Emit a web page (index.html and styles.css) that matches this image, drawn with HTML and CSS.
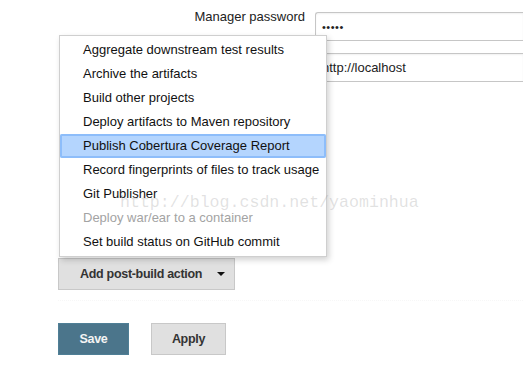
FILE: index.html
```html
<!DOCTYPE html>
<html lang="en">
<head>
    <meta charset="UTF-8">
    <title>Post-build Actions</title>
    <link rel="stylesheet" href="styles.css">
</head>
<body>
    <div class="page">
        <div class="row">
            <label class="rowLabel">Manager password</label>
            <div class="field"><span class="dots">•••••</span></div>
        </div>
        <div class="row row2">
            <span class="rowLabel"></span>
            <div class="field">http://localhost</div>
        </div>

        <div class="actionWrap">
            <ul class="menu">
                <li>Aggregate downstream test results</li>
                <li>Archive the artifacts</li>
                <li>Build other projects</li>
                <li>Deploy artifacts to Maven repository</li>
                <li class="active">Publish Cobertura Coverage Report</li>
                <li>Record fingerprints of files to track usage</li>
                <li>Git Publisher</li>
                <li class="disabled">Deploy war/ear to a container</li>
                <li>Set build status on GitHub commit</li>
            </ul>
            <button class="btn addBtn"><span>Add post-build action</span><span class="caret"></span></button>
        </div>

        <div class="sep"></div>

        <div class="bottomBar">
            <button class="btn saveBtn">Save</button>
            <button class="btn applyBtn">Apply</button>
        </div>
    </div>
    <div class="mark">http://blog.csdn.net/yaominhua</div>
</body>
</html>
```

FILE: styles.css
```css
html, body {
    margin: 0;
    padding: 0;
    background: #fff;
    overflow: hidden;
}
body {
    position: relative;
    width: 523px;
    height: 389px;
    font-family: "Liberation Sans", Arial, sans-serif;
    font-size: 13px;
    color: #111;
}
.page {
    padding: 12px 0 0 58px;
}
.row {
    display: flex;
    align-items: flex-start;
    gap: 10px;
}
.row2 {
    margin-top: 12px;
}
.rowLabel {
    width: 247px;
    flex: none;
    text-align: right;
    line-height: 16px;
    margin-top: -3px;
    color: #222;
}
.field {
    box-sizing: border-box;
    flex: none;
    width: 208px;
    height: 29px;
    border: 1px solid #c6c6c6;
    border-right: none;
    border-radius: 3px 0 0 3px;
    box-shadow: inset 0 1px 2px rgba(0, 0, 0, 0.06);
    padding: 0 6px;
    line-height: 27px;
    color: #222;
    white-space: nowrap;
}
.dots {
    font-size: 11px;
    letter-spacing: 0.5px;
}

.actionWrap {
    position: relative;
    margin-top: 176px;
    width: 177px;
}
.btn {
    box-sizing: border-box;
    font-family: "Liberation Sans", Arial, sans-serif;
    font-size: 12.5px;
    letter-spacing: -0.3px;
    font-weight: 700;
    height: 32px;
    border: 1px solid #c8c8c8;
    background: #e0e0e0;
    color: #333;
    padding: 0;
    border-radius: 0;
    white-space: nowrap;
}
.addBtn {
    width: 177px;
    padding: 0 9px 0 21px;
    display: flex;
    align-items: center;
    justify-content: space-between;
}
.caret {
    width: 0;
    height: 0;
    border-left: 4px solid transparent;
    border-right: 4px solid transparent;
    border-top: 4px solid #111;
}

.menu {
    position: absolute;
    left: 1px;
    bottom: calc(100% + 1px);
    box-sizing: border-box;
    width: 268px;
    margin: 0;
    padding: 2px 0;
    list-style: none;
    background: #fff;
    border: 1px solid #cfcfcf;
    box-shadow: 2px 3px 6px rgba(0, 0, 0, 0.18);
    z-index: 2;
}
.menu li {
    height: 24px;
    line-height: 24px;
    padding-left: 23px;
    white-space: nowrap;
    color: #111;
}
.menu li.active {
    background: #b4d5fe;
    box-shadow: inset 0 0 0 2px #8dbdfa;
    border-radius: 2px;
}
.menu li.disabled {
    color: #a3a3a3;
}

.sep {
    margin: 10px 0 0 0;
    height: 0;
    border-top: 1px dotted #f7f7f7;
}

.bottomBar {
    display: flex;
    gap: 22px;
    margin-top: 22px;
}
.saveBtn {
    width: 71px;
    background: #4b758b;
    border-color: #4f7f96;
    color: #f4f4f4;
}
.applyBtn {
    width: 75px;
}

.mark {
    position: absolute;
    left: 120px;
    top: 193px;
    font-family: "Liberation Mono", "DejaVu Sans Mono", monospace;
    font-size: 16.6px;
    color: rgba(150, 150, 150, 0.28);
    white-space: nowrap;
    z-index: 3;
    pointer-events: none;
}
```
